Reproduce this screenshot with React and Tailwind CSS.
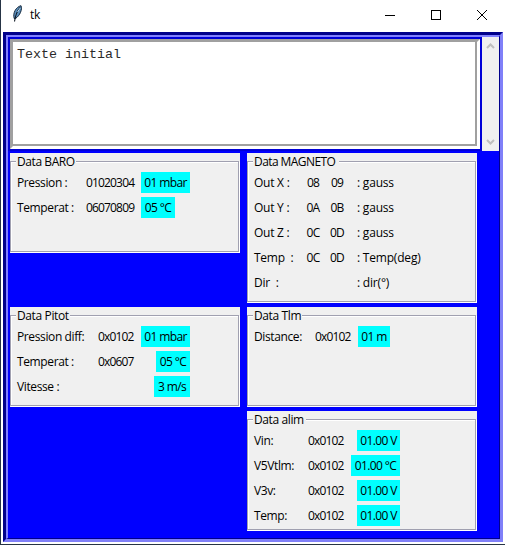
const CYAN = "flex h-[21px] items-center justify-center bg-[#00ffff] tracking-[-0.6px]";

function Text({ children, className = "" }) {
  return <span className={`whitespace-pre ${className}`}>{children}</span>;
}

function Group({ title, titleWidth, className, children }) {
  return (
    <section className={`relative w-[230px] bg-[#f0f0f0] ${className}`}>
      <div className="absolute top-[8px] right-px bottom-px left-0 border border-[#a0a0b0] shadow-[1px_1px_0_#ffffff,inset_1px_1px_0_#ffffff]" />
      <h2 className={`absolute top-0 left-[6px] h-[16px] bg-[#f0f0f0] pl-px leading-[17px] whitespace-pre ${titleWidth}`}>{title}</h2>
      <div className="flex flex-col gap-1 pt-[19px] pl-[7px]">{children}</div>
    </section>
  );
}

function Row({ label, labelClass = "", labelWidth, value, valueWidth, result, resultWidth, slot = "" }) {
  return (
    <div className="flex h-[21px] items-center">
      <Text className={`${labelWidth} ${labelClass}`}>{label}</Text>
      <Text className={`tracking-[-0.84px] ${valueWidth}`}>{value}</Text>
      <div className={`flex justify-end ${slot}`}>
        <div className={`${CYAN} ${resultWidth}`}>
          <Text>{result}</Text>
        </div>
      </div>
    </div>
  );
}

function MagnetoRow({ label, a, b, unit }) {
  return (
    <div className="flex h-[21px] items-center">
      <Text className="w-[47px] tracking-[-0.25px]">{label}</Text>
      <Text className="w-[24px] text-center tracking-[-0.8px]">{a}</Text>
      <Text className="w-[24px] text-center tracking-[-0.8px]">{b}</Text>
      <Text className="pl-[8px] tracking-[-0.2px]">{unit}</Text>
    </div>
  );
}

function Feather() {
  return (
    <svg width="12" height="18" viewBox="0 0 12 18" fill="none">
      <path d="M2.2 13.5 C.5 8 4 2 9 .7 C10.5 4.5 8 10.5 3.5 13.5Z" fill="#5b8fbd" stroke="#14283c" strokeWidth="1" />
      <path d="M8 2.5 C5 6 3.5 10 2.5 16.5" stroke="#0b1520" strokeWidth="1.1" />
      <path d="M8.2 3 L5.5 7" stroke="#b7d8f0" strokeWidth="1" />
    </svg>
  );
}

export default function App() {
  return (
    <div className="flex h-[545px] w-[505px] flex-col overflow-hidden border-b border-l border-[#263445] bg-white font-['Open_Sans','Noto_Sans',sans-serif] text-[12px] tracking-[-0.38px] text-black">
      <header className="flex h-[32px] shrink-0 items-center">
        <div className="pb-[4px] pl-[11px]"><Feather /></div>
        <span className="pb-[3px] pl-[6px] text-[12px]">tk</span>
        <div className="ml-auto flex gap-[36px] pr-[18px] pb-[3px]">
          <svg width="10" height="10" shapeRendering="crispEdges"><path d="M0 5.5H10" stroke="#000" /></svg>
          <svg width="10" height="10" shapeRendering="crispEdges"><path d="M.5.5H9.5V9.5H.5Z" stroke="#000" fill="none" /></svg>
          <svg width="10" height="10"><path d="M0 0L10 10M10 0L0 10" stroke="#000" /></svg>
        </div>
      </header>
      <div className="ml-[2px] h-[510px] w-[500px] border-t-[3px] border-r-[3px] border-b-[3px] border-l-[3px] border-t-[#00008b] border-r-[#8080f8] border-b-[#8080f8] border-l-[#00008b]">
        <div className="h-full w-full border-t-2 border-r border-b border-l-2 border-t-[#8080ff] border-r-[#00008b] border-b-[#00008b] border-l-[#8080ff] bg-[#0000ff]">
          <div className="flex h-[114px] justify-between bg-[#0000d8] pl-[2px]">
            <div className="mt-[2px] h-[110px] w-[470px] border-[3px] border-t-[#a0a0a0] border-r-white border-b-white border-l-[#a0a0a0] bg-white">
              <div className="h-full w-full border-r-2 border-b-2 border-[#a0a0a0] pt-[5px] pl-[4px] font-['Liberation_Mono',monospace] text-[13.33px] leading-[15px] tracking-[0px] text-[#2a2a2a]">Texte initial</div>
            </div>
            <div className="flex h-[114px] w-[17px] flex-col items-center justify-between bg-[#f0f0f0] py-[6px]">
              <svg width="9" height="6" fill="none"><path d="M1 5L4.5 1.5L8 5" stroke="#bfbfbf" strokeWidth="2" /></svg>
              <svg width="9" height="6" fill="none"><path d="M1 1L4.5 4.5L8 1" stroke="#bfbfbf" strokeWidth="2" /></svg>
            </div>
          </div>
          <div className="grid w-fit grid-cols-[230px_230px] items-start gap-x-[7px] gap-y-1 pt-[2px] pl-[2px]">
            <Group title="Data BARO" titleWidth="w-[60px] tracking-[-0.42px]" className="h-[100px]">
              <Row label="Pression :" labelWidth="w-[69px]" value="01020304" valueWidth="w-[55px]" result="01 mbar" resultWidth="w-[49px]" />
              <Row label="Temperat :" labelWidth="w-[69px]" value="06070809" valueWidth="w-[55px]" result="05 °C" resultWidth="w-[34px]" />
            </Group>
            <Group title="Data MAGNETO" titleWidth="w-[86px] tracking-[-0.57px]" className="h-[150px]">
              <MagnetoRow label="Out X :" a="08" b="09" unit=": gauss" />
              <MagnetoRow label="Out Y :" a="0A" b="0B" unit=": gauss" />
              <MagnetoRow label="Out Z :" a="0C" b="0D" unit=": gauss" />
              <MagnetoRow label="Temp  :" a="0C" b="0D" unit=": Temp(deg)" />
              <MagnetoRow label="Dir  :" a="" b="" unit=": dir(°)" />
            </Group>
            <Group title="Data Pitot" titleWidth="w-[54px]" className="h-[100px]">
              <Row label="Pression diff:" labelWidth="w-[81px]" value="0x0102" valueWidth="w-[43px]" result="01 mbar" resultWidth="w-[49px]" slot="w-[49px]" />
              <Row label="Temperat :" labelWidth="w-[81px]" value="0x0607" valueWidth="w-[43px]" result="05 °C" resultWidth="w-[34px]" slot="w-[49px]" />
              <Row label="Vitesse :" labelWidth="w-[81px]" value="" valueWidth="w-[43px]" result="3 m/s" resultWidth="w-[36px]" slot="w-[49px]" />
            </Group>
            <Group title="Data Tlm" titleWidth="w-[49px]" className="h-[100px]">
              <Row label="Distance:" labelWidth="w-[61px]" value="0x0102" valueWidth="w-[43px]" result="01 m" resultWidth="w-[32px]" />
            </Group>
            <Group title="Data alim" titleWidth="w-[53px]" className="col-start-2 h-[120px]">
              <Row label="Vin:" labelWidth="w-[54px]" value="0x0102" valueWidth="w-[43px]" result="01.00 V" resultWidth="w-[43px]" slot="w-[49px]" />
              <Row label="V5Vtlm:" labelWidth="w-[54px]" value="0x0102" valueWidth="w-[43px]" result="01.00 °C" resultWidth="w-[49px]" slot="w-[49px]" />
              <Row label="V3v:" labelWidth="w-[54px]" value="0x0102" valueWidth="w-[43px]" result="01.00 V" resultWidth="w-[43px]" slot="w-[49px]" />
              <Row label="Temp:" labelWidth="w-[54px]" value="0x0102" valueWidth="w-[43px]" result="01.00 V" resultWidth="w-[43px]" slot="w-[49px]" />
            </Group>
          </div>
        </div>
      </div>
    </div>
  );
}
